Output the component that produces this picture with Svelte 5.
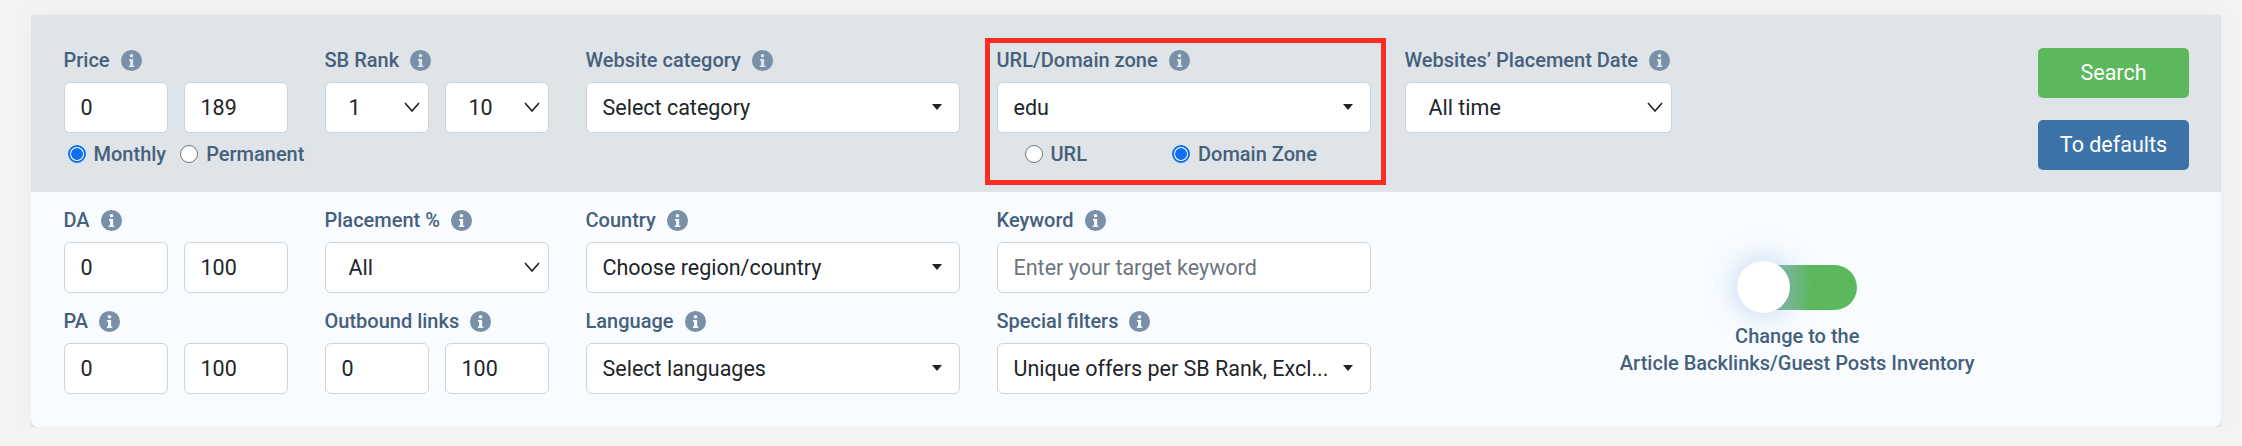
<script>
  const info = 'M12 1a11 11 0 1 0 0 22 11 11 0 0 0 0-22z M12 5.1a1.9 1.9 0 1 1 0 3.8 1.9 1.9 0 0 1 0-3.8z M9.4 10.4h4.3v6.8h1.2v1.7H9.2v-1.7h1.3v-5H9.4z';
</script>

{#snippet label(text)}
  <div class="label">
    <span>{text}</span>
    <svg class="info" viewBox="0 0 24 24" aria-hidden="true">
      <path d={info} fill="#7a90a8" fill-rule="evenodd" />
    </svg>
  </div>
{/snippet}

{#snippet caret(text)}
  <div class="select">
    <span class="select-text">{text}</span>
    <svg class="caret" viewBox="0 0 10 6" aria-hidden="true"><path d="M0 0h10L5 6z" fill="#222" /></svg>
  </div>
{/snippet}

{#snippet native(text)}
  <div class="select native">
    <span class="select-text">{text}</span>
    <svg class="chevron" viewBox="0 0 16 10" aria-hidden="true"><path d="M1 1l7 8 7-8" fill="none" stroke="#222" stroke-width="1.6" /></svg>
  </div>
{/snippet}

<div class="panel">
  <section class="grid top">
    <div class="field small">
      {@render label('Price')}
      <div class="pair">
        <input value="0" />
        <input value="189" />
      </div>
      <div class="radios price-radios">
        <label class="radio"><input type="radio" name="price" checked />Monthly</label>
        <label class="radio"><input type="radio" name="price" />Permanent</label>
      </div>
    </div>

    <div class="field small">
      {@render label('SB Rank')}
      <div class="pair">
        {@render native('1')}
        {@render native('10')}
      </div>
    </div>

    <div class="field large">
      {@render label('Website category')}
      {@render caret('Select category')}
    </div>

    <div class="field large marked">
      {@render label('URL/Domain zone')}
      {@render caret('edu')}
      <div class="radios zone-radios">
        <label class="radio"><input type="radio" name="zone" />URL</label>
        <label class="radio"><input type="radio" name="zone" checked />Domain Zone</label>
      </div>
      <div class="red-box"></div>
    </div>

    <div class="top-last">
      <div class="field date">
        {@render label('Websites’ Placement Date')}
        {@render native('All time')}
      </div>
      <div class="actions">
        <button class="btn green">Search</button>
        <button class="btn blue">To defaults</button>
      </div>
    </div>
  </section>

  <section class="grid bottom">
    <div class="field small">
      {@render label('DA')}
      <div class="pair"><input value="0" /><input value="100" /></div>
    </div>
    <div class="field small">
      {@render label('Placement %')}
      {@render native('All')}
    </div>
    <div class="field large">
      {@render label('Country')}
      {@render caret('Choose region/country')}
    </div>
    <div class="field large">
      {@render label('Keyword')}
      <input placeholder="Enter your target keyword" />
    </div>

    <div class="switch-col">
      <div class="switch">
        <span class="track"></span>
        <span class="knob"></span>
      </div>
      <p>Change to the<br />Article Backlinks/Guest Posts Inventory</p>
    </div>

    <div class="field small">
      {@render label('PA')}
      <div class="pair"><input value="0" /><input value="100" /></div>
    </div>
    <div class="field small">
      {@render label('Outbound links')}
      <div class="pair"><input value="0" /><input value="100" /></div>
    </div>
    <div class="field large">
      {@render label('Language')}
      {@render caret('Select languages')}
    </div>
    <div class="field large">
      {@render label('Special filters')}
      {@render caret('Unique offers per SB Rank, Excl...')}
    </div>
  </section>
</div>

<style>
  :global(body) {
    background: #f3f3f3;
    font-family: Roboto, "Liberation Sans", sans-serif;
  }
  .panel {
    margin: 15px 21px 0 31px;
    border-radius: 2px 2px 8px 8px;
    background: #f8fcff;
    box-shadow: 0 9px 0 rgba(0, 0, 0, 0.05), 0 0 24px rgba(0, 0, 0, 0.03);
  }
  .grid {
    display: grid;
    grid-template-columns: 261px 261px 411px 408px 1fr;
    padding-left: 32.5px;
    padding-right: 32px;
  }
  .top {
    height: 177px;
    box-sizing: border-box;
    padding-top: 33px;
    background: #dfe4e8;
    border-radius: 2px 2px 0 0;
  }
  .bottom {
    padding-top: 16px;
    padding-bottom: 33px;
    row-gap: 16px;
  }
  .field {
    display: flex;
    flex-direction: column;
    position: relative;
  }
  .small {
    width: 224px;
  }
  .large {
    width: 374px;
  }
  .date {
    width: 267px;
  }
  .label {
    display: flex;
    align-items: center;
    gap: 10px;
    height: 24px;
    margin-bottom: 10px;
    font-size: 20px;
    font-weight: 500;
    color: #46607c;
    white-space: nowrap;
  }
  .info {
    width: 23px;
    height: 23px;
    flex: none;
  }
  .pair {
    display: flex;
    justify-content: space-between;
  }
  .pair > :global(*) {
    flex: 0 0 104px;
  }
  input:not([type="radio"]),
  .select {
    box-sizing: border-box;
    height: 51px;
    border: 1px solid #ced4da;
    border-radius: 6px;
    background: #fff;
    font-family: inherit;
    font-size: 21.5px;
    color: #212529;
  }
  input:not([type="radio"]) {
    padding: 0 16px 1px;
    width: 100%;
    outline: none;
  }
  input::placeholder {
    color: #6c757d;
    opacity: 1;
  }
  .select {
    display: flex;
    align-items: center;
    justify-content: space-between;
    padding: 0 17px 1px 16px;
  }
  .select-text {
    overflow: hidden;
    white-space: nowrap;
    min-width: 0;
    flex: 1;
  }
  .caret {
    flex: none;
    width: 10px;
    height: 6px;
    margin-left: 8px;
  }
  .native {
    padding: 0 8px 1px 23px;
  }
  .chevron {
    flex: none;
    width: 16px;
    height: 10px;
  }
  .radios {
    display: flex;
    align-items: center;
    height: 18px;
    margin-top: 12px;
    font-size: 20px;
    font-weight: 500;
    color: #46607c;
  }
  .price-radios {
    padding-left: 4px;
    gap: 14px;
    white-space: nowrap;
  }
  .zone-radios {
    padding-left: 28px;
    gap: 85px;
  }
  .radio {
    display: flex;
    align-items: center;
    gap: 8px;
  }
  .radio input {
    appearance: none;
    box-sizing: border-box;
    width: 18px;
    height: 18px;
    margin: 0;
    border: 1px solid #767676;
    border-radius: 50%;
    background: #fff;
  }
  .radio input:checked {
    border: 2px solid #0f6fec;
    background: radial-gradient(circle, #0f6fec 0 5.5px, #fff 6.2px);
  }
  .red-box {
    position: absolute;
    left: -11.5px;
    right: -15.5px;
    top: -10px;
    height: 147px;
    box-sizing: border-box;
    border: 5px solid #fb2c20;
    pointer-events: none;
  }
  .top-last {
    display: flex;
    justify-content: space-between;
  }
  .actions {
    display: flex;
    flex-direction: column;
    gap: 22px;
  }
  .btn {
    width: 151px;
    height: 50px;
    padding: 0 0 2px;
    border: none;
    border-radius: 5px;
    color: #fff;
    font-family: inherit;
    font-size: 21.5px;
    font-weight: 400;
  }
  .green {
    background: #5cb85c;
  }
  .blue {
    background: #3d73a8;
  }
  .switch-col {
    grid-column: 5;
    grid-row: 1 / span 2;
    display: flex;
    flex-direction: column;
    align-items: center;
    padding-top: 53px;
    padding-left: 1px;
  }
  .switch {
    position: relative;
    width: 120px;
    height: 52px;
    display: flex;
    align-items: center;
  }
  .track {
    width: 100%;
    height: 45px;
    border-radius: 23px;
    background: linear-gradient(90deg, #9dbcc0 20%, #5cb85c 62%);
  }
  .knob {
    position: absolute;
    left: 0;
    top: 0;
    width: 53px;
    height: 52px;
    border-radius: 50%;
    background: #fff;
    box-shadow: 0 0 30px rgba(90, 150, 215, 0.4);
  }
  .switch-col p {
    margin: 10px 0 0;
    text-align: center;
    font-size: 20px;
    line-height: 27px;
    font-weight: 500;
    color: #46607c;
  }
</style>
